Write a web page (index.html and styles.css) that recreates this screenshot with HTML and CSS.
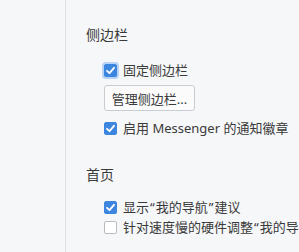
FILE: index.html
```html
<!DOCTYPE html>
<html lang="zh-CN">
<head>
<meta charset="utf-8">
<link rel="stylesheet" href="styles.css">
</head>
<body>
<div class="page">
  <aside class="side"></aside>
  <main class="main">
    <section class="group">
      <h2 class="heading">侧边栏</h2>
      <div class="items">
        <label class="row row-first">
          <span class="box checked focus"><svg viewBox="0 0 13 13" width="13" height="13"><path d="M3 6.8 L5.5 9.2 L10 3.8" fill="none" stroke="#fff" stroke-width="1.8" stroke-linecap="round" stroke-linejoin="round"/></svg></span>
          <span class="label">固定侧边栏</span>
        </label>
        <button class="btn">管理侧边栏...</button>
        <label class="row row-after-btn">
          <span class="box checked"><svg viewBox="0 0 13 13" width="13" height="13"><path d="M3 6.8 L5.5 9.2 L10 3.8" fill="none" stroke="#fff" stroke-width="1.8" stroke-linecap="round" stroke-linejoin="round"/></svg></span>
          <span class="label">启用 Messenger 的通知徽章</span>
        </label>
      </div>
    </section>
    <section class="group group-2">
      <h2 class="heading">首页</h2>
      <div class="items">
        <label class="row row-first2">
          <span class="box checked"><svg viewBox="0 0 13 13" width="13" height="13"><path d="M3 6.8 L5.5 9.2 L10 3.8" fill="none" stroke="#fff" stroke-width="1.8" stroke-linecap="round" stroke-linejoin="round"/></svg></span>
          <span class="label">显示<span class="q">“</span>我的导航<span class="q">”</span>建议</span>
        </label>
        <label class="row">
          <span class="box"></span>
          <span class="label">针对速度慢的硬件调整<span class="q">“</span>我的导航<span class="q">”</span></span>
        </label>
      </div>
    </section>
  </main>
</div>
</body>
</html>
```
FILE: styles.css
```css
html, body {
  margin: 0;
  padding: 0;
  background: #f6f7f9;
  overflow: hidden;
}
body {
  font-family: "Noto Sans", "Noto Sans CJK SC", sans-serif;
  color: #333;
  width: 299px;
  height: 252px;
}
.page {
  display: flex;
  height: 252px;
}
.side {
  width: 65px;
  flex: none;
  border-right: 1px solid #dfe1e4;
  background: #f6f7f9;
}
.main {
  flex: 1;
  padding-left: 20px;
  white-space: nowrap;
  overflow: hidden;
}
.group {
  padding-top: 25px;
}
.group-2 {
  padding-top: 27px;
}
.heading {
  margin: 0;
  font-size: 14px;
  font-weight: normal;
  line-height: 20px;
  color: #3a3a3a;
}
.items {
  padding-left: 18px;
  display: flex;
  flex-direction: column;
  align-items: flex-start;
}
.row {
  display: flex;
  align-items: center;
  height: 20px;
  font-size: 13px;
  gap: 6px;
  color: #3a3a3a;
}
.row-first { margin-top: 15px; }
.row-after-btn { margin-top: 7px; }
.row-first2 { margin-top: 12px; }
.box {
  width: 13px;
  height: 13px;
  box-sizing: border-box;
  border: 1px solid #b9bcc1;
  border-radius: 2px;
  background: #fff;
  flex: none;
  display: flex;
}
.box.checked {
  background: #3d86e0;
  border-color: #3d86e0;
}
.box.checked svg {
  margin: -1px;
}
.box.focus {
  box-shadow: 0 0 0 2px #b8d4f5;
}
.label {
  line-height: 20px;
}
.q {
  margin: 0 1px;
}
.btn {
  margin-top: 5px;
  width: 91px;
  height: 26px;
  font-family: inherit;
  font-size: 13px;
  color: #3a3a3a;
  background: #fbfbfc;
  border: 1px solid #c9ccd1;
  border-radius: 3px;
  padding: 0;
}
```
